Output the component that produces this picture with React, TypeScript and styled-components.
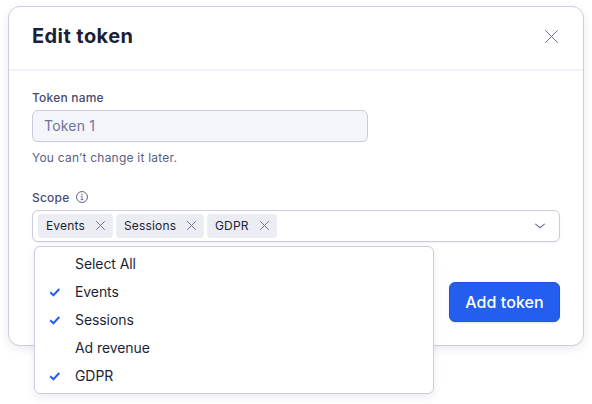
import React from 'react';
import styled, { createGlobalStyle } from 'styled-components';

const GlobalStyle = createGlobalStyle`
  *, *::before, *::after { box-sizing: border-box; }
  body {
    margin: 0;
    background: #fff;
    font-family: Inter, "Liberation Sans", sans-serif;
    color: #1c1f37;
    overflow: hidden;
  }
`;

const Page = styled.main`
  height: 404px;
  padding: 6px 8px;
`;

const Dialog = styled.section`
  width: 576px;
  height: 340px;
  border: 1px solid #cbcde2;
  border-radius: 12px;
  background: #fff;
  box-shadow: 0 3px 10px rgba(28, 31, 55, 0.09);
`;

const Header = styled.header`
  display: flex;
  align-items: center;
  justify-content: space-between;
  height: 64px;
  padding: 0 25px 4px 23px;
  border-bottom: 2px solid #f2f3fa;
`;

const Title = styled.h1`
  margin: 0;
  font-size: 20px;
  line-height: 28px;
  font-weight: 700;
  letter-spacing: 0.42px;
`;

const IconButton = styled.button<{ $size: number }>`
  display: flex;
  align-items: center;
  justify-content: center;
  width: ${({ $size }) => $size}px;
  height: ${({ $size }) => $size}px;
  padding: 0;
  border: 0;
  background: none;
  color: #6e7499;
`;

const Form = styled.form`
  display: flex;
  flex-direction: column;
  padding: 18px 23px 0;
`;

const Label = styled.label`
  display: flex;
  align-items: center;
  gap: 7px;
  height: 16px;
  margin-bottom: 5px;
  font-size: 12px;
  font-weight: 500;
  letter-spacing: 0.2px;
  color: #474c6e;
`;

const TextInput = styled.input`
  width: 336px;
  height: 32px;
  padding: 0 11px 1px;
  border: 1px solid #cbcbe1;
  border-radius: 6px;
  background: #f4f5fa;
  box-shadow: 0 1px 1px rgba(28, 31, 55, 0.03);
  font: 400 14px Inter, sans-serif;
  letter-spacing: 0.2px;
  color: #6e7499;
`;

const Hint = styled.p`
  margin: 8px 0 23px;
  font-size: 12px;
  line-height: 16px;
  letter-spacing: 0.22px;
  color: #5b6080;
`;

const SelectAnchor = styled.div`
  position: relative;
`;

const SelectBox = styled.div`
  display: flex;
  align-items: center;
  justify-content: space-between;
  height: 32px;
  padding: 0 11px 0 5px;
  border: 1px solid #cbcbe1;
  border-radius: 6px;
  background: #fff;
  box-shadow: 0 1px 2px rgba(28, 31, 55, 0.06);
`;

const Tags = styled.div`
  display: flex;
  gap: 3px;
`;

const Tag = styled.span<{ $width: number }>`
  display: flex;
  align-items: center;
  justify-content: space-between;
  width: ${({ $width }) => $width}px;
  height: 24px;
  padding: 0 4px 1px 8px;
  border-radius: 4px;
  background: #ecedf3;
  font-size: 12px;
  letter-spacing: 0.16px;
`;

const Menu = styled.ul`
  position: absolute;
  top: 36px;
  left: 2px;
  width: 400px;
  height: 148px;
  margin: 0;
  padding: 3px 0;
  list-style: none;
  border: 1px solid #cbcbe1;
  border-radius: 6px;
  background: #fff;
  box-shadow: 0 3px 10px rgba(28, 31, 55, 0.09);
`;

const Option = styled.li`
  display: grid;
  grid-template-columns: 26px 1fr;
  align-items: center;
  height: 28px;
  padding-left: 14px;
`;

const OptionText = styled.span`
  padding-bottom: 2px;
  font-size: 14px;
  letter-spacing: -0.08px;
`;

const CheckSlot = styled.span`
  display: flex;
  height: 12px;
`;

const Actions = styled.div`
  display: flex;
  justify-content: flex-end;
  margin-top: 40px;
`;

const PrimaryButton = styled.button`
  width: 111px;
  height: 40px;
  padding: 0;
  border: 1px solid #2053e2;
  border-radius: 6px;
  background: #245eee;
  box-shadow: 0 1px 2px rgba(28, 31, 55, 0.12);
  font: 500 16px Inter, sans-serif;
  letter-spacing: 0.08px;
  color: #fff;
`;

const Cross = ({ size }: { size: number }) => (
  <svg width={size} height={size} viewBox={`0 0 ${size} ${size}`} fill="none" stroke="currentColor" strokeWidth="1">
    <path d={`M.5.5 ${size - 0.5} ${size - 0.5}M${size - 0.5}.5.5 ${size - 0.5}`} strokeLinecap="round" />
  </svg>
);

const Info = () => (
  <svg width="12" height="12" viewBox="0 0 12 12" fill="none" stroke="#5f6485">
    <circle cx="6" cy="6" r="5.45" strokeWidth="1" />
    <path d="M4.9 5.3h1.2V8.6M4.7 8.6h2.7" strokeWidth=".9" />
    <circle cx="6" cy="3.4" r=".7" fill="#5f6485" stroke="none" />
  </svg>
);

const Chevron = () => (
  <svg width="16" height="16" viewBox="0 0 16 16" fill="none" stroke="#6e7499" strokeWidth="1.15">
    <path d="M3.6 6.1 8 9.8l4.4-3.7" strokeLinecap="round" strokeLinejoin="round" />
  </svg>
);

const Check = () => (
  <svg width="12" height="12" viewBox="0 0 12 12" fill="none" stroke="#2460f2" strokeWidth="2">
    <path d="M1.2 6.3 4.4 9.3 10.3 3" />
  </svg>
);

const tags = [
  { name: 'Events', width: 75 },
  { name: 'Sessions', width: 88 },
  { name: 'GDPR', width: 70 },
];

const options = [
  { name: 'Select All', checked: false },
  { name: 'Events', checked: true },
  { name: 'Sessions', checked: true },
  { name: 'Ad revenue', checked: false },
  { name: 'GDPR', checked: true },
];

export default function App() {
  return (
    <Page>
      <GlobalStyle />
      <Dialog role="dialog" aria-labelledby="dialog-title">
        <Header>
          <Title id="dialog-title">Edit token</Title>
          <IconButton $size={13} aria-label="Close"><Cross size={13} /></IconButton>
        </Header>
        <Form onSubmit={(e) => e.preventDefault()}>
          <Label htmlFor="token-name">Token name</Label>
          <TextInput id="token-name" value="Token 1" readOnly />
          <Hint>You can’t change it later.</Hint>
          <Label as="span">Scope <Info /></Label>
          <SelectAnchor>
            <SelectBox>
              <Tags>
                {tags.map((tag) => (
                  <Tag key={tag.name} $width={tag.width}>
                    {tag.name}
                    <IconButton type="button" $size={17} aria-label={`Remove ${tag.name}`}><Cross size={9} /></IconButton>
                  </Tag>
                ))}
              </Tags>
              <Chevron />
            </SelectBox>
            <Menu>
              {options.map((option) => (
                <Option key={option.name}>
                  <CheckSlot>{option.checked && <Check />}</CheckSlot>
                  <OptionText>{option.name}</OptionText>
                </Option>
              ))}
            </Menu>
          </SelectAnchor>
          <Actions>
            <PrimaryButton type="submit">Add token</PrimaryButton>
          </Actions>
        </Form>
      </Dialog>
    </Page>
  );
}
